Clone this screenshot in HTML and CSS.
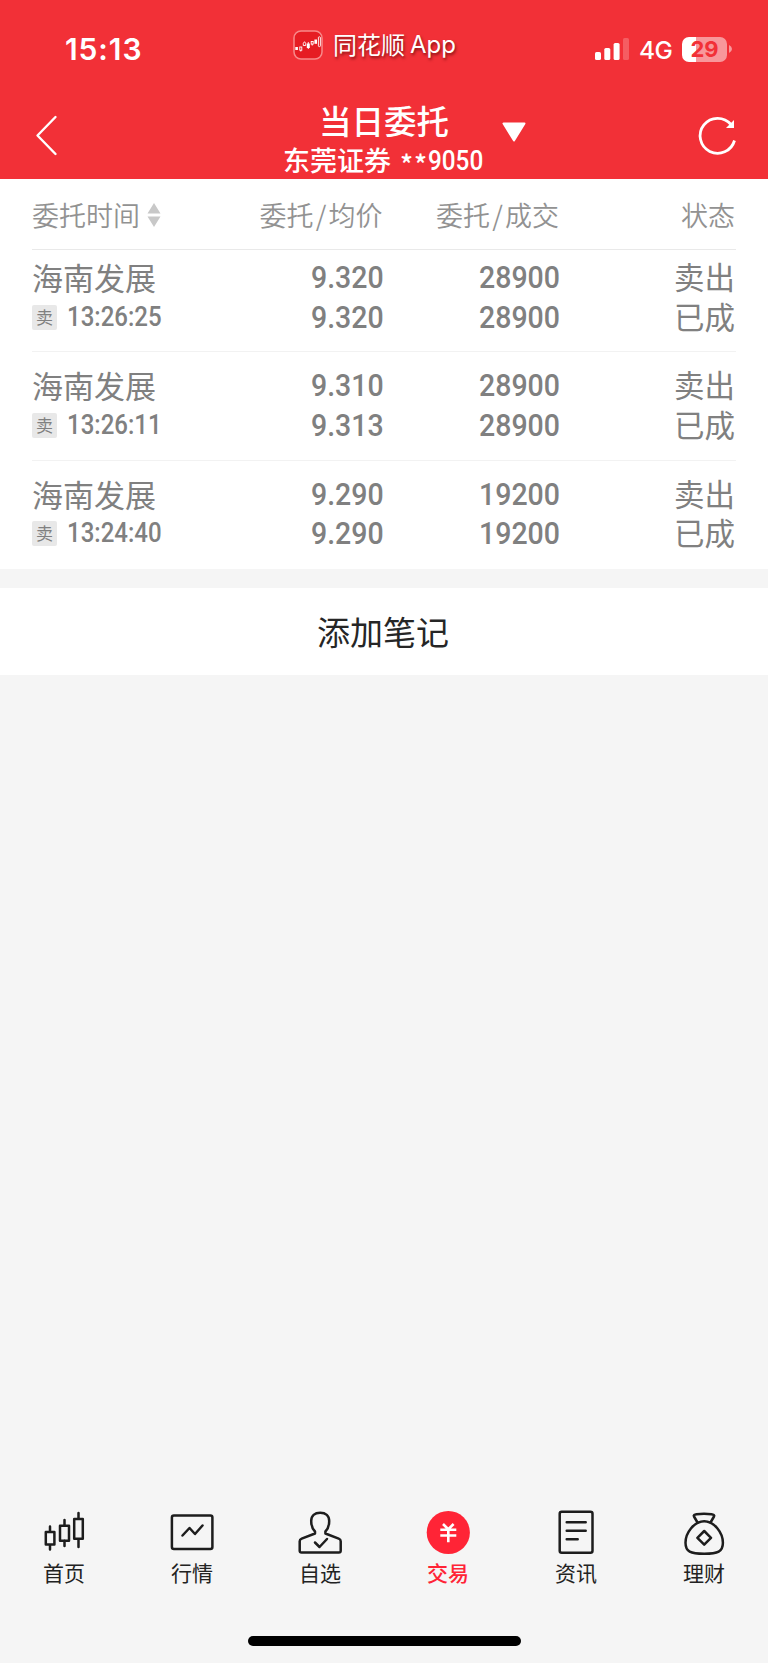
FILE: index.html
```html
<!DOCTYPE html>
<html lang="zh-CN">
<head>
<meta charset="utf-8">
<title>当日委托</title>
<link rel="stylesheet" href="styles.css">
</head>
<body>
<div class="screen">
  <header class="header">
    <div class="status">
      <div class="clock">15:13</div>
      <div class="app">
        <svg class="app-icon" width="30" height="30" viewBox="0 0 30 30">
          <rect x="1" y="1" width="28" height="28" rx="7" fill="#e61c23" stroke="#f8898a" stroke-width="1.5"/>
          <g fill="#fff"><rect x="2.3" y="17" width="2.6" height="3"/><rect x="13.8" y="13.5" width="3" height="4.5"/><rect x="21.4" y="9.5" width="2.6" height="4.3"/></g>
          <g fill="none" stroke="#fff" stroke-width=".9"><rect x="6.8" y="17" width="2" height="3.2"/><path d="M7.8 20v1.5"/><path d="M10.3 15.5v-2.2l1.2-1.6 1.2 1.6v2.2z"/><path d="M15.3 12v7"/><rect x="18.2" y="11.5" width="2" height="2.6"/><path d="M19.2 14v1.6"/><rect x="25.4" y="6.8" width="2" height="9.8" rx=".8"/></g>
        </svg>
        <span class="app-cn">同花顺</span><span class="app-en">App</span>
      </div>
      <div class="signals">
        <svg width="34" height="24" viewBox="0 0 34 24" fill="#fff"><rect y="15" width="6" height="8" rx="1.6"/><rect x="9.3" y="11" width="6" height="12" rx="1.6"/><rect x="18.6" y="6" width="6" height="17" rx="1.6"/><rect x="28" y="1" width="6" height="22" rx="1.6" opacity=".22"/></svg>
        <span class="net">4G</span>
        <span class="battery">29</span>
        <svg class="tip" width="3" height="8" viewBox="0 0 3 8"><path d="M0 0q3 1.5 3 4t-3 4z" fill="#fff" opacity=".5"/></svg>
      </div>
    </div>
    <div class="bar">
      <svg class="back" width="24" height="42" viewBox="0 0 24 42" fill="none" stroke="#fff" stroke-width="2.4" stroke-linecap="round" stroke-linejoin="round"><path d="M20.500 3 2.500 21.500 20.500 40"/></svg>
      <div class="titles">
        <h1>当日委托</h1>
        <p>东莞证券<span class="stars">**</span><span class="acct">9050</span></p>
      </div>
      <svg class="caret" width="24" height="20" viewBox="0 0 24 20"><path d="M1.500 1.500h21L12 18.500z" fill="#fff" stroke="#fff" stroke-width="2" stroke-linejoin="round"/></svg>
      <svg class="refresh" width="40" height="40" viewBox="0 0 40 40"><path d="M36.500 24.500A17.500 17.500 0 1 1 33 8.500" fill="none" stroke="#fff" stroke-width="2.800"/><path d="M36 4v8h-8z" fill="#fff"/></svg>
    </div>
  </header>

  <section class="orders">
    <div class="row head">
      <div class="first">委托时间<svg width="14" height="24" viewBox="0 0 14 24" fill="#c8c8c8"><path d="M7 0 13.500 10.500H.5zM7 24 .5 13.500h13z"/></svg></div>
      <div>委托<i>/</i>均价</div>
      <div>委托<i>/</i>成交</div>
      <div>状态</div>
    </div>
    <div class="row item">
      <div class="name">海南发展<div class="time"><b>卖</b><span>13:26:25</span></div></div>
      <div class="num"><span>9.320</span><span>9.320</span></div>
      <div class="num"><span>28900</span><span>28900</span></div>
      <div class="state"><span>卖出</span><span>已成</span></div>
    </div>
    <div class="row item">
      <div class="name">海南发展<div class="time"><b>卖</b><span>13:26:11</span></div></div>
      <div class="num"><span>9.310</span><span>9.313</span></div>
      <div class="num"><span>28900</span><span>28900</span></div>
      <div class="state"><span>卖出</span><span>已成</span></div>
    </div>
    <div class="row item">
      <div class="name">海南发展<div class="time"><b>卖</b><span>13:24:40</span></div></div>
      <div class="num"><span>9.290</span><span>9.290</span></div>
      <div class="num"><span>19200</span><span>19200</span></div>
      <div class="state"><span>卖出</span><span>已成</span></div>
    </div>
  </section>
  <div class="note">添加笔记</div>

  <nav class="tabs">
    <div class="tab"><svg viewBox="0 0 44 44"><path d="M8 15.500v5m0 13v5M22.500 9v5m0 15.500v5.500M36.500 2v6m0 20v8M3.800 21h8.600v12.500H3.800zM18 14.800h9v15h-9zM32.200 8h8.600v19.800h-8.600z"/></svg>首页</div>
    <div class="tab"><svg viewBox="0 0 44 44"><rect x="1.900" y="4.500" width="40.500" height="33.500" rx="2"/><path d="m12.500 24.500 7-7.500 5.500 6 7.500-8.500"/></svg>行情</div>
    <div class="tab"><svg viewBox="0 0 44 44"><path d="M17 20.500c-3-3-3.800-5-3.800-10.500 0-5.300 3.500-8.300 9-8.300s9 3 9 8.300c0 5.500-.8 7.500-3.800 10.500v2l13.300 5.200c1.500.6 2 1.200 2 2.500v9.500q0 1.800-1.800 1.800h-37.400q-1.800 0-1.800-1.800v-9.500c0-1.300.5-1.900 2-2.500l13.300-5.200z"/><path d="m17 31.500 4.500 4.500 7.500-8"/></svg>自选</div>
    <div class="tab active"><svg viewBox="0 0 44 44"><circle cx="22.300" cy="21.500" r="21.600"/><path d="m17 13 5.300 5.200 5.300-5.200M14.300 18.700h16M14.300 24.500h16M22.300 18.500v12.800"/></svg>交易</div>
    <div class="tab"><svg viewBox="0 0 44 44"><rect x="5.700" y=".8" width="32.800" height="41" rx="2"/><path d="M12.700 11.300h19M12.700 19.800h19M12.700 28.300h11"/></svg>资讯</div>
    <div class="tab"><svg viewBox="0 0 44 44"><path d="m15.500 11.500-3.500-6c-.8-1.200.5-1.900 2.500-2.200q7.500-.9 15 0c2 .3 3.300 1 2.500 2.200l-3.500 6"/><path d="M22.200 10.200c-10 0-18.700 11.500-18.700 21.500 0 9 5 11 18.700 11s18.700-2 18.700-11c0-10-8.700-21.500-18.700-21.500zM22.200 20l6.800 6.800-6.800 6.800-6.800-6.800z"/></svg>理财</div>
  </nav>
  <div class="home-bar"></div>
</div>
</body>
</html>
```
FILE: styles.css
```css
* { box-sizing: border-box; }
body { margin: 0; background: #f5f5f5; font-family: "Noto Sans CJK SC", sans-serif; }
.screen { display: flex; flex-direction: column; width: 768px; height: 1663px; background: #f5f5f5; overflow: hidden; }
svg { display: block; flex: none; overflow: visible; }

.header { height: 179px; background: #f23037; color: #fff; display: flex; flex-direction: column; }
.status { height: 97px; display: grid; grid-template-columns: 293px 302px 173px; align-items: start; }
.clock { padding: 31px 0 0 65px; font: 600 30px/37px Inter, sans-serif; letter-spacing: .9px; }
.app { display: flex; align-items: center; height: 30px; margin-top: 30px; font-size: 24px; line-height: 30px; text-shadow: 1px 2px 3px rgba(70, 0, 0, .65); }
.app-cn { margin: -3px 0 0 10px; }
.app-en { margin-left: 5px; font: 400 24px/30px Inter, sans-serif; }
.signals { display: flex; align-items: center; height: 26px; margin-top: 36px; }
.net { margin: 2px 0 0 10px; width: 33px; font: 500 24.500px/26px Inter, sans-serif; letter-spacing: -.5px; white-space: nowrap; }
.battery { margin-left: 10px; width: 45px; height: 25px; border-radius: 7px; background: linear-gradient(90deg, #fff 13.500px, #f8979b 13.500px); color: #f23037; font: 700 22px/25px Inter, sans-serif; text-align: center; }
.tip { margin-left: 2px; }

.bar { height: 82px; display: grid; grid-template-columns: 284px 202px 212px 1fr; align-items: start; }
.back { margin: 17px 0 0 35px; }
.titles { width: 200px; text-align: center; }
h1 { margin: 1px 0 0; font-size: 32.500px; line-height: 44px; font-weight: 500; }
.titles p { margin: -1px 0 0 -1px; display: flex; align-items: center; height: 36px; font-size: 27px; font-weight: 500; white-space: nowrap; }
.stars { margin-left: 9px; width: 26px; font-size: 27px; letter-spacing: 1px; padding-top: 8px; }
.acct { font: 500 27px/36px Roboto, sans-serif; transform: scaleX(.9); transform-origin: 0 50%; margin: 4px 0 0 2px; }
.caret { margin: 25px 0 0 16px; }
.refresh { margin-top: 19px; }

.orders { height: 389.500px; background: #fff; padding: 0 32px; }
.row { display: grid; grid-template-columns: 200px 150.500px 176.500px 176px; text-align: right; color: #808080; }
.head { height: 71px; border-bottom: 1px solid #e9e9e9; line-height: 71px; font-size: 27px; font-weight: 350; color: #929292; }
.head i { font-style: normal; display: inline-block; width: 15px; text-align: center; }
.first { display: flex; align-items: center; text-align: left; }
.first svg { margin: 1px 0 0 7px; }
.item { height: 108.500px; padding-top: 14px; border-bottom: 1px solid #f2f2f2; }
.head + .item { height: 102px; padding-top: 8px; }
.item:last-child { border: 0; }
.name { text-align: left; font-size: 31px; line-height: 38px; }
.time { display: flex; align-items: center; height: 26px; margin-top: 8px; }
.time b { width: 25px; height: 25px; border-radius: 2px; background: #e8e8e8; font-size: 17px; line-height: 24px; font-weight: 400; text-align: center; }
.time span { margin: -1px 0 0 10px; font: 500 27px/26px Roboto, sans-serif; transform: scaleX(.89); transform-origin: 0 50%; }
.num { font: 500 32px/39.500px Roboto, sans-serif; display: flex; flex-direction: column; align-items: flex-end; }
.num span { transform: scaleX(.89); transform-origin: 100% 50%; margin-right: -1px; }
.state { display: flex; flex-direction: column; font-size: 30.500px; line-height: 39.500px; margin-top: -1px; }

.note { height: 87px; margin-top: 19.500px; background: #fff; color: #262626; text-align: center; font-size: 33px; line-height: 86.500px; padding-right: 2px; }

.tabs { margin-top: auto; height: 112px; display: grid; grid-template-columns: repeat(6, 1fr); }
.tab { display: flex; flex-direction: column; align-items: center; color: #222; font-size: 21px; line-height: 30px; }
.tab svg { width: 44px; height: 44px; margin: -.5px 0 2px; fill: none; stroke: #1d1d1d; stroke-width: 2.500; stroke-linejoin: round; stroke-linecap: round; }
.active { color: #ff2436; font-weight: 500; }
.active svg { stroke: #fff; stroke-width: 2.600; stroke-linecap: butt; }
.active circle { fill: #ff2436; stroke: none; }
.home-bar { width: 273px; height: 10px; margin: 13px 0 17px 248px; border-radius: 5px; background: #000; flex: none; }
```
